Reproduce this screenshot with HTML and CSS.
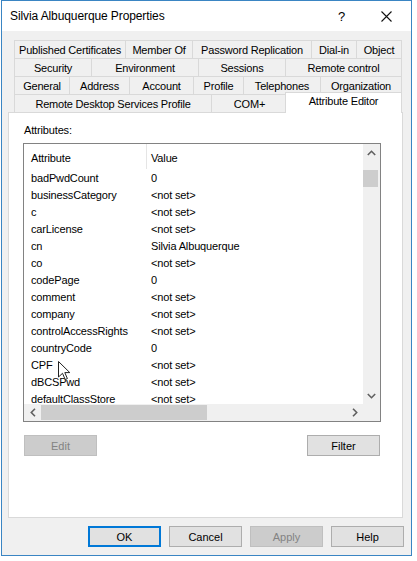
FILE: index.html
```html
<!DOCTYPE html>
<html>
<head>
<meta charset="utf-8">
<link rel="stylesheet" href="styles.css">
</head>
<body>
<div class="window">
  <div class="titlebar">
    <span class="title">Silvia Albuquerque Properties</span>
    <span class="help">?</span>
    <span class="close"><svg width="11" height="11" viewBox="0 0 11 11"><path d="M0.5 0.5 L10.5 10.5 M10.5 0.5 L0.5 10.5" stroke="#111" stroke-width="1.1" fill="none"/></svg></span>
  </div>
  <div class="body">
    <div class="tabs">
      <div class="tabrow r1">
        <div class="tab">Published Certificates</div>
        <div class="tab">Member Of</div>
        <div class="tab">Password Replication</div>
        <div class="tab">Dial-in</div>
        <div class="tab">Object</div>
      </div>
      <div class="tabrow r2">
        <div class="tab">Security</div>
        <div class="tab">Environment</div>
        <div class="tab">Sessions</div>
        <div class="tab">Remote control</div>
      </div>
      <div class="tabrow r3">
        <div class="tab">General</div>
        <div class="tab">Address</div>
        <div class="tab">Account</div>
        <div class="tab">Profile</div>
        <div class="tab">Telephones</div>
        <div class="tab">Organization</div>
      </div>
      <div class="tabrow r4">
        <div class="tab">Remote Desktop Services Profile</div>
        <div class="tab">COM+</div>
        <div class="tab active">Attribute Editor</div>
      </div>
    </div>
    <div class="panel">
      <div class="label">Attributes:</div>
      <div class="listbox">
        <div class="list-main">
          <div class="list-view">
            <div class="list-header"><span class="col-a">Attribute</span><span class="col-v">Value</span></div>
            <div class="row"><span class="col-a">badPwdCount</span><span class="col-v">0</span></div>
            <div class="row"><span class="col-a">businessCategory</span><span class="col-v">&lt;not set&gt;</span></div>
            <div class="row"><span class="col-a">c</span><span class="col-v">&lt;not set&gt;</span></div>
            <div class="row"><span class="col-a">carLicense</span><span class="col-v">&lt;not set&gt;</span></div>
            <div class="row"><span class="col-a">cn</span><span class="col-v">Silvia Albuquerque</span></div>
            <div class="row"><span class="col-a">co</span><span class="col-v">&lt;not set&gt;</span></div>
            <div class="row"><span class="col-a">codePage</span><span class="col-v">0</span></div>
            <div class="row"><span class="col-a">comment</span><span class="col-v">&lt;not set&gt;</span></div>
            <div class="row"><span class="col-a">company</span><span class="col-v">&lt;not set&gt;</span></div>
            <div class="row"><span class="col-a">controlAccessRights</span><span class="col-v">&lt;not set&gt;</span></div>
            <div class="row"><span class="col-a">countryCode</span><span class="col-v">0</span></div>
            <div class="row"><span class="col-a">CPF</span><span class="col-v">&lt;not set&gt;</span></div>
            <div class="row"><span class="col-a">dBCSPwd</span><span class="col-v">&lt;not set&gt;</span></div>
            <div class="row"><span class="col-a">defaultClassStore</span><span class="col-v">&lt;not set&gt;</span></div>
          </div>
          <div class="vscroll">
            <div class="sbtn"><svg width="9" height="6" viewBox="0 0 9 6"><path d="M0.8 5 L4.5 1.3 L8.2 5" stroke="#606060" stroke-width="1.6" fill="none"/></svg></div>
            <div class="vtrack"><div class="vthumb"></div></div>
            <div class="sbtn"><svg width="9" height="6" viewBox="0 0 9 6"><path d="M0.8 1 L4.5 4.7 L8.2 1" stroke="#606060" stroke-width="1.6" fill="none"/></svg></div>
          </div>
        </div>
        <div class="hscroll-row">
          <div class="hscroll">
            <div class="sbtn"><svg width="6" height="9" viewBox="0 0 6 9"><path d="M5 0.8 L1.3 4.5 L5 8.2" stroke="#606060" stroke-width="1.6" fill="none"/></svg></div>
            <div class="htrack"><div class="hthumb"></div></div>
            <div class="sbtn"><svg width="6" height="9" viewBox="0 0 6 9"><path d="M1 0.8 L4.7 4.5 L1 8.2" stroke="#606060" stroke-width="1.6" fill="none"/></svg></div>
          </div>
          <div class="corner"></div>
        </div>
      </div>
      <div class="panel-buttons">
        <div class="btn disabled">Edit</div>
        <div class="btn">Filter</div>
      </div>
    </div>
    <div class="dialog-buttons">
      <div class="btn default">OK</div>
      <div class="btn">Cancel</div>
      <div class="btn disabled">Apply</div>
      <div class="btn">Help</div>
    </div>
  </div>
</div>
<svg class="cursor" width="13" height="20" viewBox="0 0 13 20"><polygon points="0.5,0.5 0.5,16 4.5,12.3 7.2,18.5 9.4,17.6 6.8,11.6 11.8,11.6" fill="#fff" stroke="#222" stroke-width="1"/></svg>
</body>
</html>
```

FILE: styles.css
```css
body {
  margin: 0;
  background: #ffffff;
  font-family: "Liberation Sans", Arial, sans-serif;
  font-size: 11px;
  color: #000;
  position: relative;
}

.window {
  box-sizing: border-box;
  margin-left: 1px;
  width: 411px;
  height: 556px;
  border: 1px solid #3a85c3;
  background: #f0f0f0;
  display: flex;
  flex-direction: column;
}

.titlebar {
  height: 30px;
  flex: none;
  background: #fff;
  display: flex;
  align-items: center;
  padding-left: 8px;
  font-size: 12px;
  letter-spacing: -0.1px;
}

.title {
  flex: 1;
}

.help {
  width: 11px;
  text-align: center;
  font-size: 13px;
}

.close {
  width: 11px;
  height: 11px;
  display: flex;
  margin-left: 34px;
  margin-right: 19px;
}

.body {
  flex: 1;
  display: flex;
  flex-direction: column;
}

.tabs {
  margin: 9px 0 0 12px;
  width: 388px;
}

.tabrow {
  display: grid;
  height: 18px;
}

.r1 { grid-template-columns: 111px 67px 119px 45px 46px; }
.r2 { grid-template-columns: 77px 107px 87px 117px; }
.r3 { grid-template-columns: 55px 60px 64px 50px 77px 82px; }
.r4 { grid-template-columns: 197px 76px 115px; }

.tab {
  box-sizing: border-box;
  border-top: 1px solid #d9d9d9;
  border-left: 1px solid #d9d9d9;
  display: flex;
  align-items: center;
  justify-content: center;
  white-space: nowrap;
  background: #f0f0f0;
  padding-top: 1px;
  letter-spacing: -0.2px;
}

.tab:last-child {
  border-right: 1px solid #d9d9d9;
}

.tab.active {
  background: #fff;
  margin: -2px 0 -1px -2px;
  position: relative;
  z-index: 1;
  padding-top: 0;
  padding-bottom: 4px;
}

.panel {
  box-sizing: border-box;
  margin-left: 6px;
  width: 395px;
  height: 406px;
  background: #fff;
  border: 1px solid #d9d9d9;
  padding: 11px 0 0 14px;
}

.label {
  height: 13px;
  line-height: 13px;
  margin-left: 1px;
  margin-bottom: 6px;
  letter-spacing: -0.15px;
}

.listbox {
  box-sizing: border-box;
  width: 358px;
  height: 279px;
  border: 1px solid #828282;
  display: flex;
  flex-direction: column;
}

.list-main {
  display: flex;
  height: 260px;
}

.list-view {
  flex: 1;
  overflow: hidden;
  background: #fff;
}

.list-header {
  height: 25px;
  display: flex;
  align-items: stretch;
}

.list-header span {
  display: flex;
  align-items: center;
  padding-top: 2px;
}

.col-a {
  box-sizing: border-box;
  width: 123px;
  padding-left: 7px;
  white-space: nowrap;
  letter-spacing: -0.15px;
}

.list-header .col-a {
  border-right: 1px solid #e5e5e5;
}

.col-v {
  padding-left: 4px;
  white-space: nowrap;
  letter-spacing: -0.15px;
}

.row {
  height: 17px;
  display: flex;
  align-items: center;
}

.vscroll {
  width: 17px;
  background: #f0f0f0;
  display: flex;
  flex-direction: column;
}

.sbtn {
  width: 17px;
  height: 17px;
  flex: none;
  display: flex;
  align-items: center;
  justify-content: center;
}

.vtrack {
  flex: 1;
  padding-top: 9px;
}

.vthumb {
  width: 15px;
  height: 17px;
  background: #cdcdcd;
}

.hscroll-row {
  display: flex;
  height: 17px;
}

.hscroll {
  flex: 1;
  display: flex;
  background: #f0f0f0;
}

.htrack {
  flex: 1;
  display: flex;
  align-items: center;
}

.hthumb {
  width: 166px;
  height: 15px;
  background: #cdcdcd;
}

.corner {
  width: 17px;
  background: #f0f0f0;
}

.panel-buttons {
  margin: 13px 0 0 1px;
  width: 356px;
  display: flex;
  justify-content: space-between;
}

.btn {
  box-sizing: border-box;
  width: 73px;
  height: 21px;
  border: 1px solid #adadad;
  background: #e1e1e1;
  display: flex;
  align-items: center;
  justify-content: center;
}

.btn.disabled {
  background: #cccccc;
  border-color: #bfbfbf;
  color: #838383;
}

.btn.default {
  border: 2px solid #0078d7;
}

.dialog-buttons {
  margin-top: 8px;
  display: flex;
  justify-content: flex-end;
  gap: 8px;
  padding-right: 7px;
}

.cursor {
  position: absolute;
  left: 58px;
  top: 361px;
}
```
